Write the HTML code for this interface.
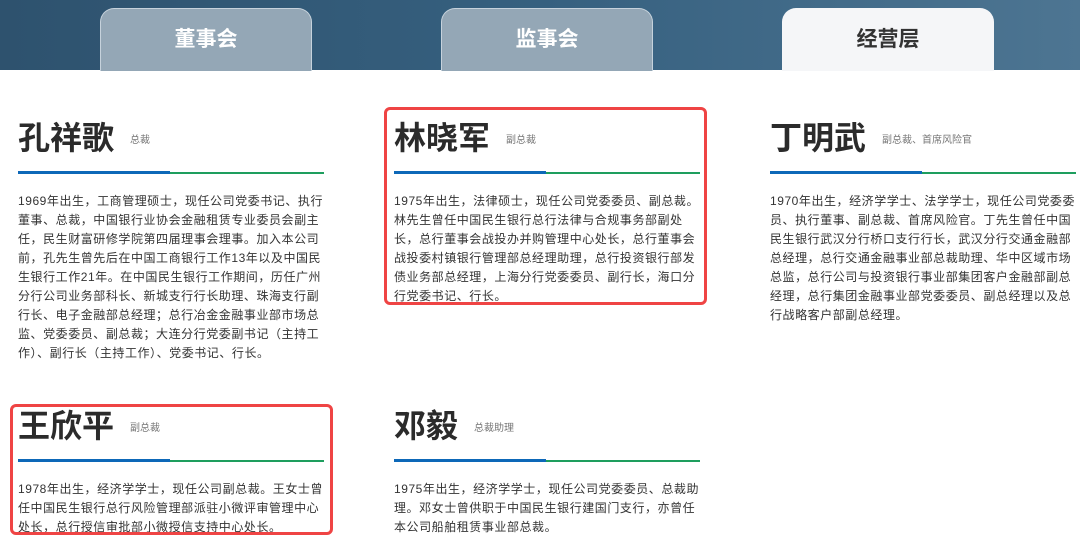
<!DOCTYPE html>
<html><head><meta charset="utf-8">
<style>
*{margin:0;padding:0;box-sizing:border-box}
body{width:1080px;height:536px;overflow:hidden;background:#fff;font-family:"Liberation Sans","Noto Sans CJK SC",sans-serif;position:relative}
.hdr{position:absolute;left:0;top:0;width:1080px;height:70px;background:linear-gradient(90deg,#2e526e 0%,#36607f 50%,#4d7592 100%)}
.tab{position:absolute;top:8px;height:63px;width:212px;border-radius:14px 14px 0 0;background:#94a7b6;border:1px solid #c6d2dc;border-bottom:none;color:#fff;font-size:21px;font-weight:bold;text-align:center;line-height:62px;font-family:"Liberation Sans","Noto Sans CJK SC",sans-serif}
.tab.on{background:#f5f6f8;color:#333;border-color:#f5f6f8}
.col{position:absolute;width:306px}
.nm{font-size:32px;font-weight:bold;color:#2b2b2b;height:46px;line-height:46px;white-space:nowrap}
.nm span{font-size:10px;font-weight:normal;color:#777;margin-left:16px;vertical-align:6px}
.ln{position:relative;height:3px;margin-top:10px}
.ln:before{content:"";position:absolute;left:0;top:0;width:152px;height:3px;background:#0d68b8}
.ln:after{content:"";position:absolute;left:152px;right:0;top:1px;height:1.5px;background:#1e9e5e}
.tx{margin-top:18px;font-size:12px;line-height:19px;color:#333;white-space:nowrap;letter-spacing:0.55px}
.box{position:absolute;border:3px solid #ef4444;border-radius:6px}
</style></head><body>
<div class="hdr"></div>
<div class="tab" style="left:100px">董事会</div>
<div class="tab" style="left:441px">监事会</div>
<div class="tab on" style="left:782px">经营层</div>

<div class="col" style="left:18px;top:115px">
<div class="nm">孔祥歌<span>总裁</span></div><div class="ln"></div>
<div class="tx">1969年出生，工商管理硕士，现任公司党委书记、执行<br>董事、总裁，中国银行业协会金融租赁专业委员会副主<br>任，民生财富研修学院第四届理事会理事。加入本公司<br>前，孔先生曾先后在中国工商银行工作13年以及中国民<br>生银行工作21年。在中国民生银行工作期间，历任广州<br>分行公司业务部科长、新城支行行长助理、珠海支行副<br>行长、电子金融部总经理；总行冶金金融事业部市场总<br>监、党委委员、副总裁；大连分行党委副书记（主持工<br>作）、副行长（主持工作）、党委书记、行长。</div>
</div>

<div class="col" style="left:394px;top:115px">
<div class="nm">林晓军<span>副总裁</span></div><div class="ln"></div>
<div class="tx">1975年出生，法律硕士，现任公司党委委员、副总裁。<br>林先生曾任中国民生银行总行法律与合规事务部副处<br>长，总行董事会战投办并购管理中心处长，总行董事会<br>战投委村镇银行管理部总经理助理，总行投资银行部发<br>债业务部总经理，上海分行党委委员、副行长，海口分<br>行党委书记、行长。</div>
</div>

<div class="col" style="left:770px;top:115px">
<div class="nm">丁明武<span>副总裁、首席风险官</span></div><div class="ln"></div>
<div class="tx">1970年出生，经济学学士、法学学士，现任公司党委委<br>员、执行董事、副总裁、首席风险官。丁先生曾任中国<br>民生银行武汉分行桥口支行行长，武汉分行交通金融部<br>总经理，总行交通金融事业部总裁助理、华中区域市场<br>总监，总行公司与投资银行事业部集团客户金融部副总<br>经理，总行集团金融事业部党委委员、副总经理以及总<br>行战略客户部副总经理。</div>
</div>

<div class="col" style="left:18px;top:403px">
<div class="nm">王欣平<span>副总裁</span></div><div class="ln"></div>
<div class="tx">1978年出生，经济学学士，现任公司副总裁。王女士曾<br>任中国民生银行总行风险管理部派驻小微评审管理中心<br>处长，总行授信审批部小微授信支持中心处长。</div>
</div>

<div class="col" style="left:394px;top:403px">
<div class="nm">邓毅<span>总裁助理</span></div><div class="ln"></div>
<div class="tx">1975年出生，经济学学士，现任公司党委委员、总裁助<br>理。邓女士曾供职于中国民生银行建国门支行，亦曾任<br>本公司船舶租赁事业部总裁。</div>
</div>

<div class="box" style="left:384px;top:107px;width:323px;height:198px"></div>
<div class="box" style="left:10px;top:404px;width:323px;height:131px"></div>
</body></html>
